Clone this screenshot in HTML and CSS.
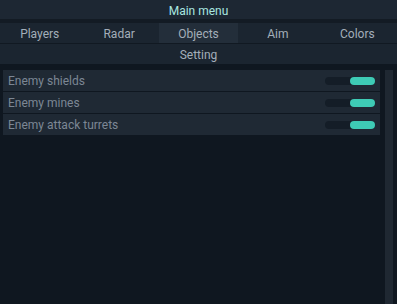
FILE: index.html
```html
<!DOCTYPE html>
<html lang="en">
<head>
    <meta charset="UTF-8">
    <title>Main menu</title>
    <link rel="stylesheet" href="styles.css">
</head>
<body>
    <div class="menu">
        <div class="title">Main menu</div>
        <div class="tabs">
            <div class="tab">Players</div>
            <div class="tab">Radar</div>
            <div class="tab active">Objects</div>
            <div class="tab">Aim</div>
            <div class="tab">Colors</div>
        </div>
        <div class="subtitle">Setting</div>

        <div class="content">
            <div class="list">
                <div class="row">
                    <span>Enemy shields</span>
                    <div class="toggle on"><div class="knob"></div></div>
                </div>
                <div class="row">
                    <span>Enemy mines</span>
                    <div class="toggle on"><div class="knob"></div></div>
                </div>
                <div class="row">
                    <span>Enemy attack turrets</span>
                    <div class="toggle on"><div class="knob"></div></div>
                </div>
            </div>
            <div class="scrollbar"></div>
        </div>
    </div>
</body>
</html>
```
FILE: styles.css
```css
body {
    margin: 0;
    background-color: #0f1720;
    font-family: Roboto, "Liberation Sans", sans-serif;
    font-size: 12px;
    height: 100vh;
    overflow: hidden;
}

.menu {
    display: flex;
    flex-direction: column;
    height: 100%;
}

.title {
    height: 19px;
    line-height: 22px;
    text-align: center;
    background-color: #1d2733;
    color: #a8e6e0;
    border-bottom: 4px solid #131b24;
}

.tabs {
    display: flex;
    height: 20px;
    background-color: #1b2530;
    border-bottom: 1px solid #111922;
}

.tab {
    flex: 1;
    text-align: center;
    line-height: 23px;
    color: #a3aeb9;
}

.tab.active {
    background-color: #232e3a;
}

.subtitle {
    height: 20px;
    line-height: 22px;
    text-align: center;
    background-color: #1b2530;
    color: #a3aeb9;
}

.content {
    display: flex;
    flex: 1;
    padding: 6px 4px 0 3px;
    gap: 5px;
}

.list {
    flex: 1;
    display: flex;
    flex-direction: column;
    gap: 1px;
    align-self: flex-start;
}

.row {
    display: flex;
    align-items: center;
    justify-content: space-between;
    height: 20px;
    padding: 1px 5px 0 5px;
    background-color: #1f2934;
    color: #7c8794;
}

.toggle {
    width: 50px;
    height: 8px;
    border-radius: 4px;
    background-color: #141d27;
    display: flex;
    justify-content: flex-end;
}

.knob {
    width: 25px;
    height: 8px;
    border-radius: 4px;
    background-color: #3ecbb5;
}

.scrollbar {
    width: 8px;
    background-color: #1f2832;
}
```
